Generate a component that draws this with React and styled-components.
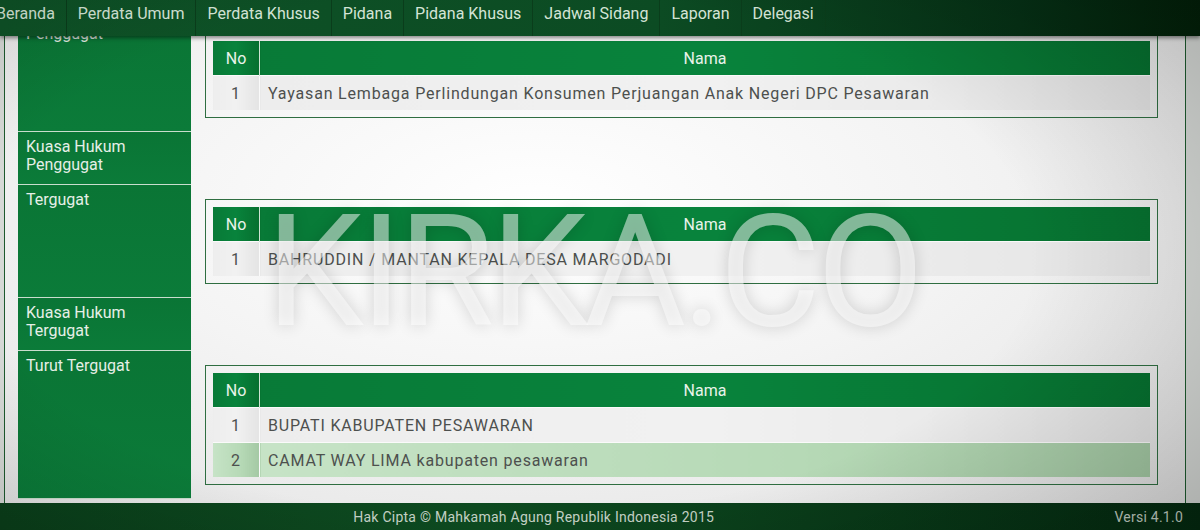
import React from 'react';
import styled, { createGlobalStyle } from 'styled-components';

const GlobalStyle = createGlobalStyle`
  html, body {
    margin: 0;
    padding: 0;
    height: 100%;
    overflow: hidden;
    background: #d6d9d6;
  }
  body {
    font-family: Roboto, "Noto Sans", "Liberation Sans", sans-serif;
  }
  #root { height: 100%; }
`;

const Page = styled.div`
  position: relative;
  height: 530px;
  display: flex;
  flex-direction: column;
  overflow: hidden;
`;

const NavBar = styled.nav`
  position: absolute;
  top: 0;
  left: 0;
  right: 0;
  height: 36px;
  background: linear-gradient(to right, #0e5327, #0c4b23 55%, #053015 85%, #022009);
  box-shadow: 0 2px 4px rgba(0, 0, 0, 0.45);
  z-index: 5;
`;

const NavList = styled.ul`
  display: flex;
  margin: 0 0 0 -15px;
  padding: 0;
  list-style: none;
`;

const NavItem = styled.li`
  padding: 0 11px;
  height: 36px;
  line-height: 27px;
  font-size: 16px;
  color: #d4e4d6;
  white-space: nowrap;
  border-right: 1px solid #0a3d1b;
`;

const Main = styled.main`
  flex: 1;
  overflow: hidden;
  padding: 5px 14px 0 4px;
`;

const Panel = styled.div`
  border: 1px solid #1d5a2e;
  padding: 13px 13px 5px;
  background: radial-gradient(ellipse at 45% 40%, #ffffff 0%, #f4f4f4 45%, #e2e2e2 100%);
`;

const Row = styled.div`
  display: grid;
  grid-template-columns: 173px 1fr;
`;

const Label = styled.div`
  background: linear-gradient(to bottom, #0a7535, #0b7b39);
  color: #e6efe7;
  font-size: 16px;
  line-height: 18px;
  padding: 6px 8px 0;
  min-height: 46px;
  border-bottom: 1px solid #c9ddcd;
`;

const Cell = styled.div`
  padding: ${p => (p.$empty ? '0' : '14px')};
`;

const Box = styled.div`
  border: 1px solid #2f6e41;
  padding: 7px;
`;

const Table = styled.table`
  width: 100%;
  border-collapse: collapse;
  font-size: 16px;
`;

const Th = styled.th`
  height: 34px;
  padding: 0;
  font-weight: 400;
  color: #e9f3ea;
  background: linear-gradient(to right, #087a37, #08833c 50%, #06702f);
  border-left: 1px solid #cfe4d4;
  width: ${p => p.$w || 'auto'};
  &:first-child { border-left: none; }
`;

const Td = styled.td`
  height: 34px;
  padding: 0 8px;
  color: #4d504e;
  letter-spacing: 0.82px;
  text-align: ${p => (p.$center ? 'center' : 'left')};
  background: ${p =>
    p.$hl
      ? 'linear-gradient(to right, #c6e3c6, #b6d9b6 60%, #a4c9a4)'
      : 'linear-gradient(to right, #ededed, #f1f1f1 50%, #e4e4e4)'};
  border-top: 1px solid #fafafa;
  border-left: 1px solid #fafafa;
  &:first-child { border-left: none; }
`;

const Footer = styled.footer`
  height: 27px;
  display: grid;
  grid-template-columns: 1fr auto;
  column-gap: 47px;
  align-items: center;
  padding-right: 17px;
  font-size: 14px;
  letter-spacing: 0.25px;
  color: #c3d0c4;
  background: linear-gradient(to right, #0a3f1a, #0d4a20 40%, #083817 75%, #042a10);
`;

const Copy = styled.div`
  text-align: center;
`;

const Watermark = styled.div`
  position: absolute;
  top: 194px;
  left: 266px;
  font-size: 156px;
  line-height: 1;
  letter-spacing: -4px;
  color: rgba(255, 255, 255, 0.5);
  text-shadow: 0 0 16px rgba(0, 0, 0, 0.16);
  pointer-events: none;
  z-index: 4;
`;

const Vignette = styled.div`
  position: absolute;
  inset: 0;
  pointer-events: none;
  z-index: 6;
  background: radial-gradient(ellipse 80% 90% at 42% 48%, rgba(0, 0, 0, 0) 55%, rgba(0, 0, 0, 0.24) 100%);
`;

const menu = ['Beranda', 'Perdata Umum', 'Perdata Khusus', 'Pidana', 'Pidana Khusus', 'Jadwal Sidang', 'Laporan', 'Delegasi'];

const pihak = [
  { label: 'Penggugat', names: ['Yayasan Lembaga Perlindungan Konsumen Perjuangan Anak Negeri DPC Pesawaran'] },
  { label: ['Kuasa Hukum', 'Penggugat'] },
  { label: 'Tergugat', names: ['BAHRUDDIN / MANTAN KEPALA DESA MARGODADI'] },
  { label: ['Kuasa Hukum', 'Tergugat'] },
  { label: 'Turut Tergugat', names: ['BUPATI KABUPATEN PESAWARAN', 'CAMAT WAY LIMA kabupaten pesawaran'] },
];

function PihakTable({ names }) {
  return (
    <Box>
      <Table>
        <thead>
          <tr>
            <Th $w="46px">No</Th>
            <Th>Nama</Th>
          </tr>
        </thead>
        <tbody>
          {names.map((n, i) => (
            <tr key={i}>
              <Td $center $hl={i % 2 === 1}>{i + 1}</Td>
              <Td $hl={i % 2 === 1}>{n}</Td>
            </tr>
          ))}
        </tbody>
      </Table>
    </Box>
  );
}

export default function App() {
  return (
    <Page>
      <GlobalStyle />
      <NavBar>
        <NavList>
          {menu.map(m => (
            <NavItem key={m}>{m}</NavItem>
          ))}
        </NavList>
      </NavBar>
      <Main>
        <Panel>
          {pihak.map((p, i) => (
            <Row key={i}>
              <Label>
                {Array.isArray(p.label) ? (
                  <>
                    {p.label[0]}
                    <br />
                    {p.label[1]}
                  </>
                ) : (
                  p.label
                )}
              </Label>
              <Cell $empty={!p.names}>{p.names && <PihakTable names={p.names} />}</Cell>
            </Row>
          ))}
        </Panel>
      </Main>
      <Footer>
        <Copy>Hak Cipta © Mahkamah Agung Republik Indonesia 2015</Copy>
        <div>Versi 4.1.0</div>
      </Footer>
      <Watermark>KIRKA.CO</Watermark>
      <Vignette />
    </Page>
  );
}
